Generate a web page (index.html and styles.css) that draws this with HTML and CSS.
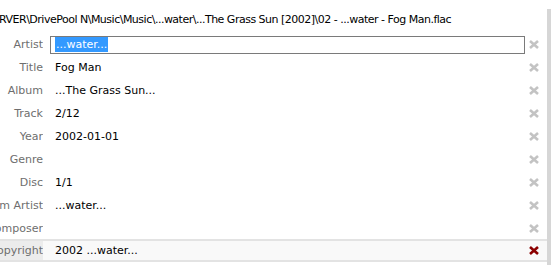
FILE: index.html
```html
<!DOCTYPE html>
<html lang="en">
<head>
    <meta charset="UTF-8">
    <title>Tag Editor</title>
    <link rel="stylesheet" href="styles.css">
</head>
<body>
  <div class="panel">
    <!-- file path -->
    <div class="path"><span>RVER\DrivePool N\Music\Music\...water\...The Grass Sun [2002]\02 - ...water - Fog Man.flac</span></div>

    <!-- tag rows -->
    <div class="tags">
      <div class="row">
        <span class="label">Artist</span>
        <div class="value edit"><span class="sel">...water...</span></div>
        <span class="clear"><svg width="10" height="9" viewBox="0 0 10 9"><path d="M1 1 L9 8 M9 1 L1 8" /></svg></span>
      </div>
      <div class="row">
        <span class="label">Title</span>
        <div class="value">Fog Man</div>
        <span class="clear"><svg width="10" height="9" viewBox="0 0 10 9"><path d="M1 1 L9 8 M9 1 L1 8" /></svg></span>
      </div>
      <div class="row">
        <span class="label">Album</span>
        <div class="value">...The Grass Sun...</div>
        <span class="clear"><svg width="10" height="9" viewBox="0 0 10 9"><path d="M1 1 L9 8 M9 1 L1 8" /></svg></span>
      </div>
      <div class="row">
        <span class="label">Track</span>
        <div class="value">2/12</div>
        <span class="clear"><svg width="10" height="9" viewBox="0 0 10 9"><path d="M1 1 L9 8 M9 1 L1 8" /></svg></span>
      </div>
      <div class="row">
        <span class="label">Year</span>
        <div class="value">2002-01-01</div>
        <span class="clear"><svg width="10" height="9" viewBox="0 0 10 9"><path d="M1 1 L9 8 M9 1 L1 8" /></svg></span>
      </div>
      <div class="row">
        <span class="label">Genre</span>
        <div class="value"></div>
        <span class="clear"><svg width="10" height="9" viewBox="0 0 10 9"><path d="M1 1 L9 8 M9 1 L1 8" /></svg></span>
      </div>
      <div class="row">
        <span class="label">Disc</span>
        <div class="value">1/1</div>
        <span class="clear"><svg width="10" height="9" viewBox="0 0 10 9"><path d="M1 1 L9 8 M9 1 L1 8" /></svg></span>
      </div>
      <div class="row">
        <span class="label">Album Artist</span>
        <div class="value">...water...</div>
        <span class="clear"><svg width="10" height="9" viewBox="0 0 10 9"><path d="M1 1 L9 8 M9 1 L1 8" /></svg></span>
      </div>
      <div class="row">
        <span class="label">Composer</span>
        <div class="value"></div>
        <span class="clear"><svg width="10" height="9" viewBox="0 0 10 9"><path d="M1 1 L9 8 M9 1 L1 8" /></svg></span>
      </div>
      <div class="row hover">
        <span class="label">Copyright</span>
        <div class="value">2002 ...water...</div>
        <span class="clear"><svg width="10" height="9" viewBox="0 0 10 9"><path d="M1 1 L9 8 M9 1 L1 8" /></svg></span>
      </div>
    </div>
  </div>
  <div class="scrollbar"><div class="thumb"></div></div>
</body>
</html>
```

FILE: styles.css
```css
body { margin: 0; display: flex; height: 265px; overflow: hidden; background: #fff; font-family: "DejaVu Sans", Verdana, sans-serif; font-size: 11px; color: #000; }
.panel { flex: 1; padding-top: 8px; overflow: hidden; }
.path { height: 23px; line-height: 23px; white-space: nowrap; overflow: hidden; letter-spacing: -0.5px; }
.path span { margin-left: -1px; }
.tags { padding-top: 2px; }
.row { display: grid; grid-template-columns: 43px 475px 22px; column-gap: 7px; height: 23px; align-items: center; }
.label { text-align: right; color: #6e6e6e; white-space: nowrap; direction: rtl; overflow: hidden; }
.value { padding-left: 5px; white-space: nowrap; }
.value.edit { height: 18px; box-sizing: border-box; border: 1px solid #7a7a7a; padding-left: 4px; line-height: 16px; }
.sel { background: #3399ff; color: #fff; padding: 1px 1px; }
.clear { display: flex; justify-content: flex-start; padding-left: 4px; margin-left: -7px; }
.clear path { stroke: #c3c3c3; stroke-width: 2.6; fill: none; }
.row.hover { background: #f9f9f9; border-top: 2px solid #e3e3e3; border-bottom: 2px solid #e3e3e3; height: 23px; box-sizing: border-box; margin-top: -1px; }
.row.hover .label { background: #ececec; height: 19px; line-height: 19px; }
.row.hover .clear path { stroke: #8b0000; }
.scrollbar { width: 4px; padding-top: 9px; background: #fff; }
.thumb { height: 100%; background: #d6d6d6; }
```
